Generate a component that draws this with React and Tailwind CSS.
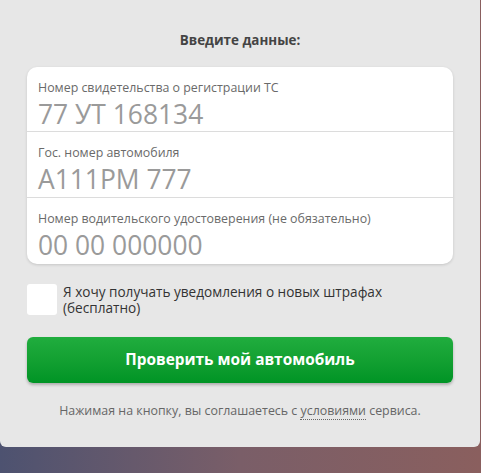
export default function App() {
  const font = { fontFamily: '"Open Sans", "Noto Sans", sans-serif' };
  return (
    <div className="w-[481px] h-[473px] bg-gradient-to-r from-[#4d5270] via-[#7a5e68] to-[#8a5f5e] overflow-hidden" style={font}>
      <div className="w-[480px] h-[447px] bg-[#e7e7e7] rounded-b-[6px] flex flex-col items-center pt-[31px] px-[27px]">
        <div className="text-[13.4px] font-bold text-[#444] leading-[18px]">Введите данные:</div>
        <div className="mt-[18px] w-[426px] bg-white rounded-[10px] shadow-[0_1px_3px_rgba(0,0,0,0.15)] flex flex-col">
          <div className="h-[65px] px-[11px] pt-[13px] border-b border-[#dcdcdc]">
            <div className="text-[12.4px] text-[#6a6a6a] leading-[16px]">Номер свидетельства о регистрации ТС</div>
            <div className="text-[26.4px] text-[#9a9a9a] leading-[30px] mt-[3px]">77 УТ 168134</div>
          </div>
          <div className="h-[66px] px-[11px] pt-[13px] border-b border-[#dcdcdc]">
            <div className="text-[12.4px] text-[#6a6a6a] leading-[16px]">Гос. номер автомобиля</div>
            <div className="text-[26.4px] text-[#9a9a9a] leading-[30px] mt-[3px]">A111PM 777</div>
          </div>
          <div className="h-[66px] px-[11px] pt-[13px]">
            <div className="text-[12.4px] text-[#6a6a6a] leading-[16px]">Номер водительского удостоверения (не обязательно)</div>
            <div className="text-[26.4px] text-[#9a9a9a] leading-[30px] mt-[3px]">00 00 000000</div>
          </div>
        </div>
        <div className="self-stretch mt-[20px] flex items-start gap-[6px]">
          <div className="w-[30px] h-[31px] bg-white rounded-[3px] shrink-0"></div>
          <div className="text-[13.6px] font-medium text-[#333] leading-[16px]">
            <div>Я хочу получать уведомления о новых штрафах</div>
            <div>(бесплатно)</div>
          </div>
        </div>
        <button className="mt-[21px] w-[426px] h-[46px] rounded-[6px] bg-gradient-to-b from-[#20ad3e] to-[#009425] shadow-[0_2px_3px_rgba(0,0,0,0.25)] text-white font-bold text-[15.4px]">
          Проверить мой автомобиль
        </button>
        <div className="mt-[20px] text-[12.4px] text-[#666] leading-[15px]">
          Нажимая на кнопку, вы соглашаетесь с{" "}
          <span className="border-b border-dotted border-[#666]">условиями</span> сервиса.
        </div>
      </div>
    </div>
  );
}
